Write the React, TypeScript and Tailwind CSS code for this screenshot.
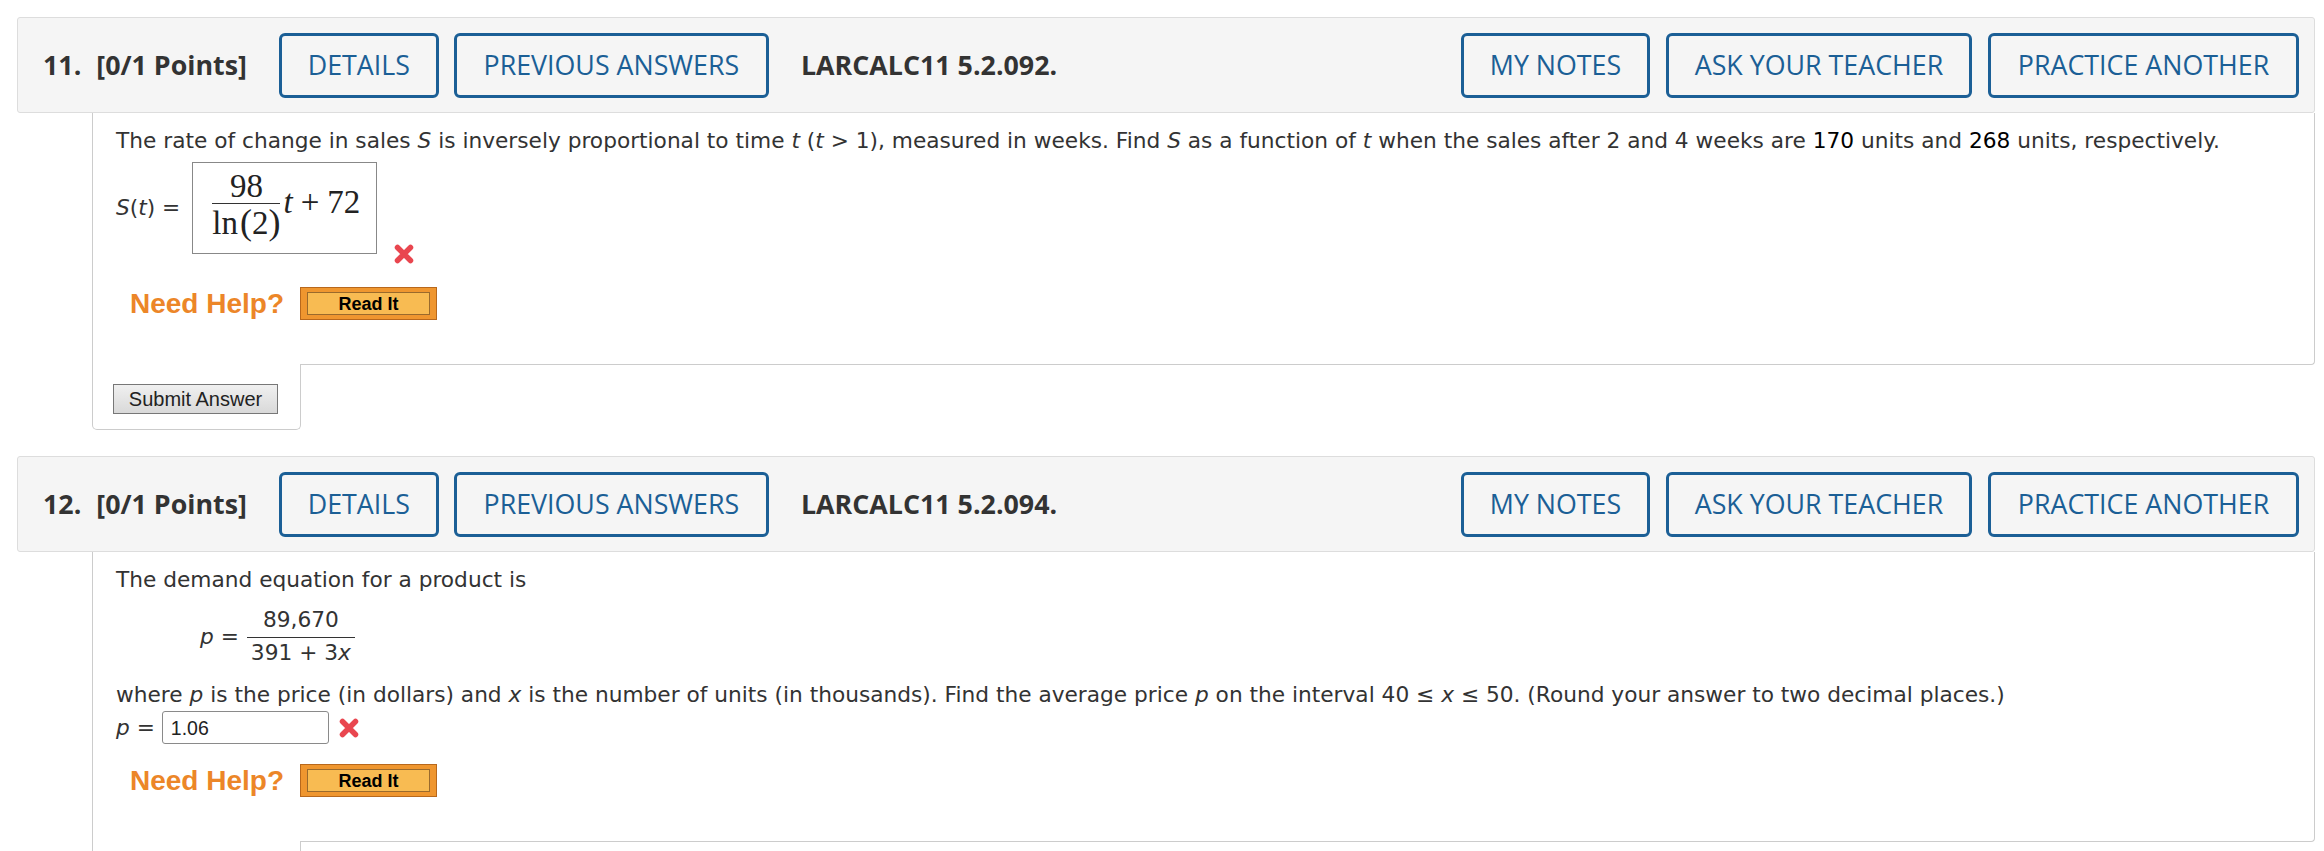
import React from "react";

function XMark() {
  return (
    <svg width="22" height="22" viewBox="0 0 22 22" className="shrink-0">
      <path d="M4.5 4.5 L17.5 17.5 M17.5 4.5 L4.5 17.5" stroke="#e9464f" strokeWidth="5.5" strokeLinecap="round" />
    </svg>
  );
}

function HButton({ children, className }: { children: React.ReactNode; className: string }) {
  return (
    <div
      className={
        "h-[65px] shrink-0 flex items-center justify-center border-[3px] border-[#1b5f96] rounded-[6px] text-[#1b5f96] font-medium " +
        className
      }
    >
      {children}
    </div>
  );
}

function Header({ num, code }: { num: string; code: string }) {
  return (
    <div className="flex items-center h-[96px] bg-[#f5f5f5] border border-[#dddddd] rounded-[3px] pl-[25px] pr-[15px] font-['Open_Sans',sans-serif] text-[26.8px] leading-none whitespace-nowrap">
      <span className="font-bold text-[#333333]">{num}.</span>
      <span className="font-bold text-[#333333] ml-[15px]">[0/1 Points]</span>
      <HButton className="ml-[32px] w-[160px]">DETAILS</HButton>
      <HButton className="ml-[15px] w-[315px]">PREVIOUS ANSWERS</HButton>
      <span className="ml-[32px] font-bold text-[#333333]">LARCALC11 {code}.</span>
      <div className="flex-1" />
      <HButton className="w-[189px]">MY NOTES</HButton>
      <HButton className="ml-[16px] w-[306px]">ASK YOUR TEACHER</HButton>
      <HButton className="ml-[16px] w-[311px]">PRACTICE ANOTHER</HButton>
    </div>
  );
}

function NeedHelp({ className }: { className: string }) {
  return (
    <div className={"flex items-center h-[33px] " + className}>
      <span className="pl-[14px] font-['Liberation_Sans',Arial,sans-serif] font-bold text-[28px] leading-none text-[#ec8628]">
        Need Help?
      </span>
      <div className="ml-[16px] w-[137px] h-[33px] border border-[#b8681c] bg-[#ef962f] px-[6px] py-[4px]">
        <div className="h-full border border-[#9a6a2c] bg-[#f8bb52] flex items-center justify-center font-['Liberation_Sans',Arial,sans-serif] font-bold text-[18px] leading-none text-black">
          Read It
        </div>
      </div>
    </div>
  );
}

function SubmitBox() {
  return (
    <div className="ml-[75px] w-[209px] -mt-px bg-white border-l border-r border-b border-[#cccccc] rounded-b-[5px] pl-[20px] pt-[20px] pb-[15px]">
      <div className="w-[165px] h-[30px] border border-[#777777] bg-gradient-to-b from-[#f0f0f0] to-[#d9d9d9] flex items-center justify-center font-['Liberation_Sans',Arial,sans-serif] text-[20px] leading-none text-[#222222]">
        Submit Answer
      </div>
    </div>
  );
}

const bodyCls =
  "ml-[75px] border-l border-r border-b border-[#cccccc] rounded-br-[4px] pl-[23px] pt-[15px] pb-[44px] font-['DejaVu_Sans',Verdana,sans-serif] text-[21.7px] leading-[26px] text-[#333333] whitespace-nowrap";

export default function App() {
  return (
    <div className="w-[2324px] h-[851px] overflow-hidden bg-white pt-[17px] pl-[17px] pr-[9px]">
      {/* Question 11 */}
      <Header num="11" code="5.2.092" />
      <div className={bodyCls}>
        <div>
          The rate of change in sales <i>S</i> is inversely proportional to time <i>t</i> (<i>t</i> &gt; 1), measured in
          weeks. Find <i>S</i> as a function of <i>t</i> when the sales after 2 and 4 weeks are{" "}
          <span className="text-black">170</span> units and <span className="text-black">268</span> units,
          respectively.
        </div>
        <div className="flex items-start mt-[8px]">
          <div className="h-[92px] flex items-center">
            <span>
              <i>S</i>(<i>t</i>) =
            </span>
          </div>
          <div className="ml-[12px] w-[185px] h-[92px] border border-[#888888] flex items-start pl-[19px] pt-[8px] font-['Liberation_Serif',serif] text-[33px] leading-[30px] text-[#222222]">
            <div className="flex flex-col items-center">
              <span className="pb-[2px]">98</span>
              <div className="h-px self-stretch bg-[#333333]" />
              <span className="pt-[3px] leading-[30px]">
                ln<span className="ml-[2px] text-[36px] leading-[30px]">(</span>2
                <span className="text-[36px] leading-[30px]">)</span>
              </span>
            </div>
            <span className="mt-[16px] ml-[3px]">
              <i>t</i>
              <span className="mx-[8px]">+</span>72
            </span>
          </div>
          <div className="ml-[16px] mt-[81px]">
            <XMark />
          </div>
        </div>
        <NeedHelp className="mt-[22px]" />
      </div>
      <SubmitBox />

      {/* Question 12 */}
      <div className="mt-[26px]">
        <Header num="12" code="5.2.094" />
      </div>
      <div className={bodyCls}>
        <div>The demand equation for a product is</div>
        <div className="flex items-center mt-[14px] ml-[84px]">
          <span>
            <i>p</i> =
          </span>
          <div className="ml-[8px] flex flex-col items-center">
            <span className="px-[4px] pb-[4px]">89,670</span>
            <div className="h-px self-stretch bg-[#333333]" />
            <span className="px-[4px] pt-[2px]">
              391 + 3<i>x</i>
            </span>
          </div>
        </div>
        <div className="mt-[16px]">
          where <i>p</i> is the price (in dollars) and <i>x</i> is the number of units (in thousands). Find the average
          price <i>p</i> on the interval 40 ≤ <i>x</i> ≤ 50. (Round your answer to two decimal places.)
        </div>
        <div className="flex items-center h-[33px] mt-[3px]">
          <span>
            <i>p</i> =
          </span>
          <div className="ml-[7px] w-[167px] h-[33px] border border-[#8a8a8a] rounded-[3px] flex items-center pl-[8px] font-['Liberation_Sans',Arial,sans-serif] text-[19.5px] text-[#222222]">
            1.06
          </div>
          <div className="ml-[9px]">
            <XMark />
          </div>
        </div>
        <NeedHelp className="mt-[20px]" />
      </div>
      <SubmitBox />
    </div>
  );
}
